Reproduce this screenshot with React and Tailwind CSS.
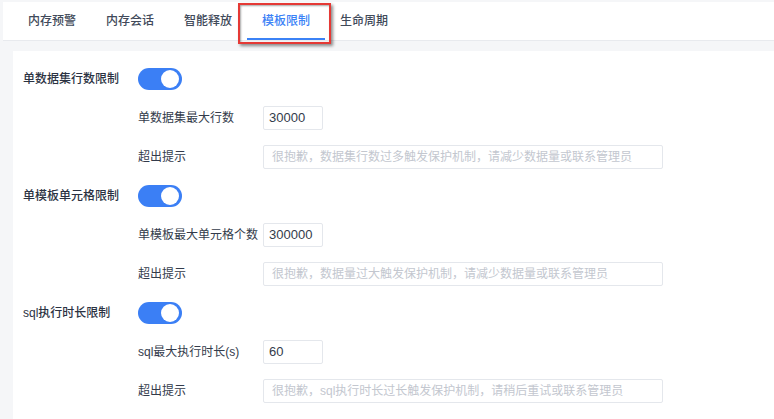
import React from "react";

const tabs = ["内存预警", "内存会话", "智能释放", "模板限制", "生命周期"];

const sections = [
  {
    title: "单数据集行数限制",
    label: "单数据集最大行数",
    value: "30000",
    tip: "很抱歉，数据集行数过多触发保护机制，请减少数据量或联系管理员",
  },
  {
    title: "单模板单元格限制",
    label: "单模板最大单元格个数",
    value: "300000",
    tip: "很抱歉，数据量过大触发保护机制，请减少数据量或联系管理员",
  },
  {
    title: "sql执行时长限制",
    label: "sql最大执行时长(s)",
    value: "60",
    tip: "很抱歉，sql执行时长过长触发保护机制，请稍后重试或联系管理员",
  },
];

const Toggle = () => (
  <div className="relative w-[44px] h-[22px] rounded-full bg-[#3b7ff5]">
    <div className="absolute right-[3px] top-[2px] w-[18px] h-[18px] rounded-full bg-white" />
  </div>
);

const App = () => {
  return (
    <div
      className="w-[774px] h-[419px] bg-[#f5f6f8] pt-[2px] overflow-hidden text-[12px]"
      style={{ fontFamily: '"Liberation Sans", "Noto Sans CJK SC", sans-serif' }}
    >
      {/* Tabs */}
      <div className="ml-[3px] h-[39px] bg-white border-b border-[#e8eaee] flex pl-[10px]">
        {tabs.map((t) => {
          const active = t === "模板限制";
          return (
            <div
              key={t}
              className={`relative w-[78px] flex items-center justify-center text-[12px] font-medium ${
                active ? "text-[#3b82f6]" : "text-[#414a5a]"
              }`}
            >
              {t}
              {active && (
                <>
                  <div className="absolute left-0 right-0 bottom-[0px] h-[2px] bg-[#3b82f6]" />
                  <div className="absolute left-[-9px] right-[-6px] top-[1px] bottom-[-4px] border-2 border-[#e53935] shadow-[2px_2px_3px_rgba(0,0,0,0.45),inset_1px_1px_2px_rgba(0,0,0,0.35)]" />
                </>
              )}
            </div>
          );
        })}
      </div>

      <div className="flex h-full mt-[10px]">
        {/* Left strip */}
        <div className="w-[13px] flex flex-col">
          <div className="flex-1" />
          <div className="w-[4px] h-[24px] bg-[#dce5fb] mb-[20px]" />
        </div>

        {/* Content */}
        <div className="flex-1 bg-white pt-[8px] pl-[10px] text-[#2f3646]">
          {sections.map((s) => (
            <div key={s.title}>
              <div className="h-[39px] flex items-center">
                <div className="w-[115px] font-medium text-[#2b3242]">{s.title}</div>
                <Toggle />
              </div>
              <div className="h-[39px] flex items-center pl-[115px]">
                <div className="w-[125px] text-[#333b4b]">{s.label}</div>
                <div className="w-[60px] h-[24px] border border-[#e4e7ec] rounded-[2px] flex items-center pl-[5px] text-[13px] text-[#333b4b]">
                  {s.value}
                </div>
              </div>
              <div className="h-[39px] flex items-center pl-[115px]">
                <div className="w-[125px] text-[#333b4b]">超出提示</div>
                <div className="w-[400px] h-[24px] border border-[#e4e7ec] rounded-[2px] flex items-center pl-[8px] text-[#c3c7cf]">
                  {s.tip}
                </div>
              </div>
            </div>
          ))}
        </div>
      </div>
    </div>
  );
};

export default App;
